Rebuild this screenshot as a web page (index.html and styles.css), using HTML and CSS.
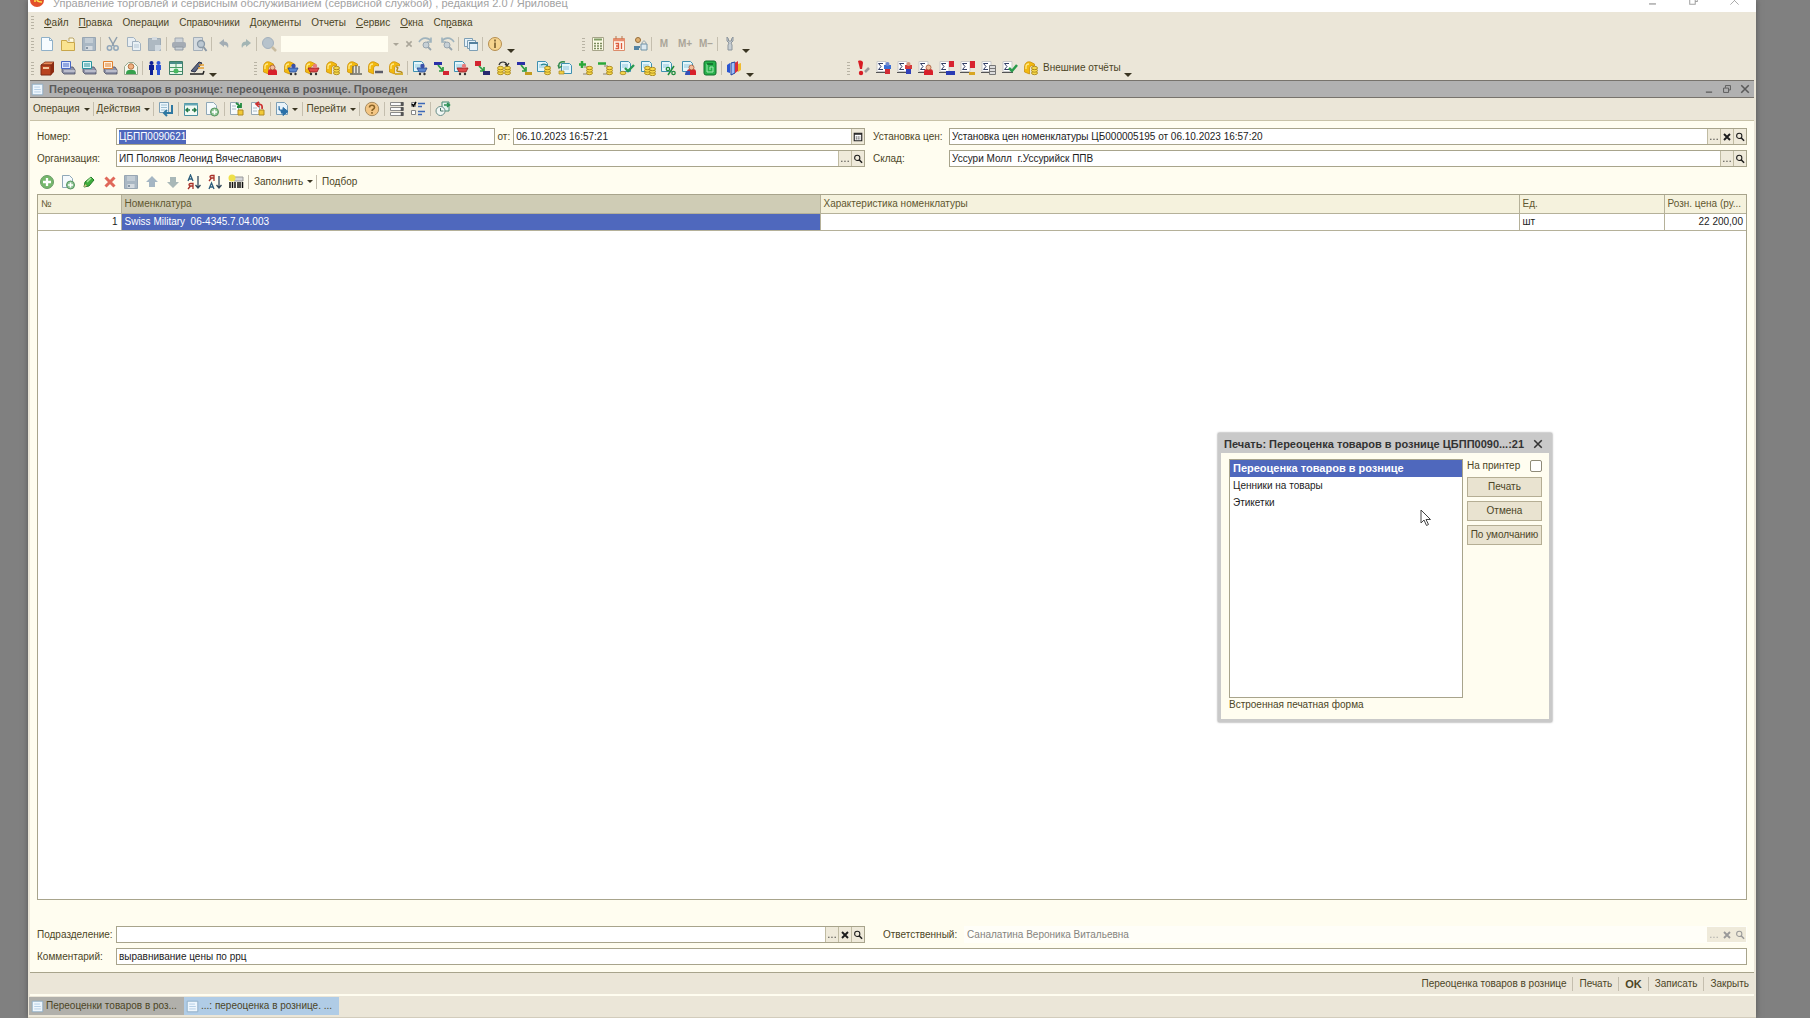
FILE: index.html
```html
<!DOCTYPE html>
<html lang="ru">
<head>
<meta charset="utf-8">
<title>Переоценка товаров в рознице</title>
<link rel="stylesheet" href="styles.css">
<script src="app.js" defer></script>
</head>
<body>
<svg class="sprite" aria-hidden="true">
  <defs>
    <!-- shared parts -->
    <g id="p-page"><path d="M2.500 1.500h8l3 3v10h-11z" fill="#f6fbff" stroke="#8fb0c8"/><path d="M10.500 1.500v3h3" fill="none" stroke="#8fb0c8"/></g>
    <g id="p-sheet"><path d="M1.500 1.500h8l2 2v8h-10z" fill="#e4f6fb" stroke="#3f90b0"/><path d="M3 5h6M3 7h6" stroke="#8fc6dc"/></g>
    <g id="p-sigma"><path d="M1 1.500h9v10H1z" fill="#fff" stroke="#c9c9c9"/><path d="M0 12.500h11" stroke="#555"/><path d="M7 3.500H2.500L5 6.500 2.500 9.500H7" fill="none" stroke="#333f66"/></g>
    <g id="p-coin"><path d="M1.500 12V7c0-4 3-6 6-5l4 2v2c-3-1-5 0-5 3v5z" fill="#f2b90f" stroke="#c98a00" stroke-width=".7"/><path d="M3 9V7c0-2 1-3 3-3" fill="none" stroke="#ffe888" stroke-width="1.300"/></g>
    <g id="p-money"><g fill="#f7d84a" stroke="#a07c10" stroke-width=".8"><ellipse cx="11.500" cy="13" rx="3" ry="1.700"/><ellipse cx="11.500" cy="10.500" rx="3" ry="1.700"/><ellipse cx="11.500" cy="8" rx="3" ry="1.700"/></g></g>
    <g id="p-printer"><path d="M2 9l3-2h8l2 3v4H4l-2-2z" fill="#8f93a8" stroke="#4c4f66" stroke-width=".8"/><path d="M4 11h11" stroke="#e6e6ee"/></g>
    <g id="p-red"><path d="M6 15v-3c0-2 1-3 3-3h3c2 0 3 1 3 3v3z" fill="#d8202a"/><circle cx="10.500" cy="7.500" r="2.500" fill="#f3bd9b" stroke="#9a4a28" stroke-width=".7"/></g>
    <g id="p-cart"><path d="M5 8h10l-2 4H7z" fill="#5a86cf" stroke="#24448c" stroke-width=".8"/><circle cx="8" cy="14" r="1.200" fill="#333"/><circle cx="12.500" cy="14" r="1.200" fill="#333"/><circle cx="10.500" cy="6" r="2.200" fill="#3a4fa8"/></g>
    <g id="p-cartred"><path d="M4 8h11l-2 4H6z" fill="#e04848" stroke="#8e1c1c" stroke-width=".8"/><circle cx="7" cy="14" r="1.200" fill="#333"/><circle cx="12" cy="14" r="1.200" fill="#333"/><circle cx="11" cy="6" r="2.200" fill="#e67c7c"/></g>
    <g id="p-lens"><circle cx="7" cy="6.500" r="3.500" fill="none" stroke-width="1.400"/><path d="M9.500 9l4 4" stroke-width="2"/></g>
  </defs>

  <symbol id="i-new" viewBox="0 0 16 16"><use href="#p-page"/></symbol>
  <symbol id="i-doc" viewBox="0 0 16 16"><path d="M1.500 1.500h13v13h-13z" fill="#eef6fd" stroke="#86a7c2"/><path d="M4 5h7M4 8h8M4 11h8" stroke="#a9c6e2"/></symbol>
  <symbol id="i-open" viewBox="0 0 16 16"><path d="M1.500 4.500h5l1 2h7v8h-13z" fill="#fae390" stroke="#c8a64a"/><path d="M9 5V2h4l1 1v3" fill="#fffbe0" stroke="#b9a468"/></symbol>
  <symbol id="i-save" viewBox="0 0 16 16"><path d="M1.500 1.500h13v13h-13z" fill="#a9b7c3" stroke="#98a6b3"/><path d="M4 2h8v5H4z" fill="#c3cdd5"/><path d="M4.500 10h7v4h-7z" fill="#d5dbe0"/><path d="M6 11v2" stroke="#8796a4" stroke-width="2"/></symbol>
  <symbol id="i-cut" viewBox="0 0 16 16"><path d="M4 1l5 9M12 1L7 10" stroke="#8e9eac" stroke-width="1.500"/><g fill="none" stroke="#91a7ba" stroke-width="1.500"><circle cx="4.500" cy="12" r="2.200"/><circle cx="11" cy="12" r="2.200"/></g></symbol>
  <symbol id="i-copy" viewBox="0 0 16 16"><path d="M1.500 1.500h6l2 2v7h-8z" fill="#e8eef2" stroke="#a2b2c0"/><path d="M6.500 5.500h6l2 2v7h-8z" fill="#eaf1f5" stroke="#a2b2c0"/><path d="M8 9h5M8 11h5" stroke="#b4c6d4"/></symbol>
  <symbol id="i-paste" viewBox="0 0 16 16"><path d="M1.500 2.500h12v12h-12z" fill="#aeb9c2" stroke="#9caab6"/><path d="M5 1h5v3H5z" fill="#d5dbe0"/><path d="M8 9h6v4l-2 2H8z" fill="#cfd8df"/></symbol>
  <symbol id="i-print" viewBox="0 0 16 16"><path d="M4 2h8v5H4z" fill="#ccd2d8" stroke="#a0a8b0"/><rect x="1" y="6" width="14" height="6" rx="2" fill="#a4abb4"/><path d="M4 11h8v3H4z" fill="#c9d0d6" stroke="#9199a3"/></symbol>
  <symbol id="i-preview" viewBox="0 0 16 16"><path d="M1.500 1.500h9v13h-9z" fill="#d6dce1" stroke="#a4afb9"/><circle cx="9" cy="8" r="3.500" fill="#bcc8d2" stroke="#8998a6" stroke-width="1.300"/><path d="M11.500 11l3 4" stroke="#8b98a6" stroke-width="2"/></symbol>
  <symbol id="i-undo" viewBox="0 0 16 16"><path d="M3 7l5-4v2.500c4 0 5 3 4 6.500-1-2-2-3-4-3V11z" fill="#a3adb4"/></symbol>
  <symbol id="i-redo" viewBox="0 0 16 16"><path d="M14 7L9 3v2.500c-4 0-5 3-4 6.500 1-2 2-3 4-3V11z" fill="#a3b5b4"/></symbol>
  <symbol id="i-find" viewBox="0 0 16 16"><circle cx="7" cy="7" r="5.500" fill="#b7c3cc" stroke="#a3b0bc"/><path d="M11 11l4 4" stroke="#c8bca0" stroke-width="2.500"/></symbol>
  <symbol id="i-xgrey" viewBox="0 0 16 16"><path d="M5 5l6 6M11 5l-6 6" stroke="#aaa69a" stroke-width="1.800"/></symbol>
  <symbol id="i-next" viewBox="0 0 16 16"><path d="M1 6c3-5 9-5 12-1M13 1.500V6H9" fill="none" stroke="#9fb3bd" stroke-width="1.600"/><circle cx="8" cy="9" r="3" fill="#c6d0d6" stroke="#98a5ae"/><path d="M10 11l3 3" stroke="#98a5ae" stroke-width="1.800"/></symbol>
  <symbol id="i-prev" viewBox="0 0 16 16"><path d="M15 6C12 1 6 1 3 5M3 1.500V6h4" fill="none" stroke="#9fb3bd" stroke-width="1.600"/><circle cx="8" cy="9" r="3" fill="#c6d0d6" stroke="#98a5ae"/><path d="M10 11l3 3" stroke="#98a5ae" stroke-width="1.800"/></symbol>
  <symbol id="i-windows" viewBox="0 0 16 16"><g fill="#e6f2fa" stroke="#7d9fb5"><path d="M1.500 2.500h8v8h-8z"/><path d="M4.500 4.500h8v8h-8z"/><path d="M6.500 6.500h8v8h-8z"/></g><path d="M6 7h9" stroke="#54809e" stroke-width="2"/></symbol>
  <symbol id="i-info" viewBox="0 0 16 16"><circle cx="8" cy="8" r="6.500" fill="#f6d48e" stroke="#b58e50"/><path d="M8 6.500V12M8 3.500v2" stroke="#7c6232" stroke-width="1.700"/></symbol>
  <symbol id="i-calc" viewBox="0 0 16 16"><path d="M2.500 1.500h11v13h-11z" fill="#fbfae6" stroke="#a7a58a"/><path d="M4 3.500h8" stroke="#7f9c64" stroke-width="2"/><path d="M4 7.500h8M4 10h8M4 12.500h8" stroke="#7b8b5c" stroke-width="1.500" stroke-dasharray="2 1"/></symbol>
  <symbol id="i-cal" viewBox="0 0 16 16"><path d="M2.500 2.500h11v12h-11z" fill="#fff4ea" stroke="#dc8d6c"/><path d="M2 4h12" stroke="#e88c6c" stroke-width="2.500"/><path d="M5 0v3M11 0v3" stroke="#b87850"/><path d="M4.500 7.500h3v5h-3M5 10h2.500M10.500 7v6" fill="none" stroke="#dd5a3c" stroke-width="1.300"/></symbol>
  <symbol id="i-usercalc" viewBox="0 0 16 16"><circle cx="6" cy="4" r="2.500" fill="#e0b070" stroke="#956b35"/><path d="M2 11h6M2 13h5" stroke="#5484a4" stroke-width="1.800"/><path d="M9 8h6v6H9z" fill="#dce9f0" stroke="#6f91a6"/><path d="M10 8c0-4 4-4 4 0" fill="none" stroke="#8fa4b0"/></symbol>
  <symbol id="i-wrench" viewBox="0 0 16 16"><path d="M5 1v4l2 2-1 2v5h4V9L9 7l2-2V1L9.500 3v2h-3V3z" fill="#c8cfd4" stroke="#8c959c"/></symbol>

  <symbol id="i-book" viewBox="0 0 16 16"><path d="M2 5l4-3h9l-3 3z" fill="#e98a58" stroke="#7c2a14" stroke-width=".8"/><path d="M2 5h10v10H2z" fill="#b9431f" stroke="#7c2a14"/><path d="M12 5l3-3v10l-3 3z" fill="#8c2a10"/><path d="M4 8h6" stroke="#f2c69c" stroke-width="2"/></symbol>
  <symbol id="i-pr1" viewBox="0 0 16 16"><use href="#p-printer"/><path d="M1.500 1.500h9v7h-9z" fill="#dce6ff" stroke="#4766c4"/><path d="M3 4h6M3 6h6" stroke="#4766c4"/></symbol>
  <symbol id="i-pr2" viewBox="0 0 16 16"><use href="#p-printer"/><path d="M1.500 1.500h9v7h-9z" fill="#dff6f6" stroke="#28929c"/><path d="M3 4h6M3 6h6" stroke="#28929c"/></symbol>
  <symbol id="i-pr3" viewBox="0 0 16 16"><use href="#p-printer"/><path d="M1.500 1.500h9v7h-9z" fill="#fff0dc" stroke="#e08030"/><path d="M3 4h6M3 6h6" stroke="#e08030"/></symbol>
  <symbol id="i-client" viewBox="0 0 16 16"><path d="M1.500 6.500l4-4h5l4 4v8h-13z" fill="#f4f8ee" stroke="#98a890"/><circle cx="8" cy="6.500" r="2.800" fill="#f0b080" stroke="#a05a28" stroke-width=".8"/><path d="M3 14c0-4 2-4 5-4s5 0 5 4z" fill="#36a04c"/></symbol>
  <symbol id="i-people" viewBox="0 0 16 16"><g fill="#0d1f96"><circle cx="4.500" cy="3" r="2"/><path d="M2 5h5v5H6v5H3v-5H2z"/></g><g fill="#2e55d8"><circle cx="11.500" cy="3" r="2"/><path d="M9 5h5v5h-1v5h-3v-5H9z"/></g></symbol>
  <symbol id="i-table" viewBox="0 0 16 16"><path d="M1.500 1.500h13v13h-13z" fill="#e8f5ea" stroke="#3f7f68"/><path d="M2 3h12" stroke="#4c8c8c" stroke-width="2"/><path d="M2 7.500h12M8 2v5M2 11.500h12" stroke="#4d9a68"/><circle cx="8" cy="11" r="2.500" fill="#48b860"/></symbol>
  <symbol id="i-sign" viewBox="0 0 16 16"><path d="M2 11l8-9 3 1-7 9z" fill="#5e6782" stroke="#2b3148"/><path d="M1 14h13l1-3" fill="none" stroke="#222" stroke-width="1.500"/><path d="M10 5h5M9 8h6" stroke="#e8a030" stroke-width="1.500"/></symbol>

  <symbol id="i-c1" viewBox="0 0 16 16"><use href="#p-coin"/><use href="#p-red"/></symbol>
  <symbol id="i-c2" viewBox="0 0 16 16"><use href="#p-coin"/><use href="#p-cart"/></symbol>
  <symbol id="i-c3" viewBox="0 0 16 16"><use href="#p-coin"/><use href="#p-cartred"/></symbol>
  <symbol id="i-c4" viewBox="0 0 16 16"><use href="#p-coin"/><use href="#p-money"/></symbol>
  <symbol id="i-c5" viewBox="0 0 16 16"><use href="#p-coin"/><path d="M7 6v7M10 5v8M13 6v7M4 14h12" stroke="#6a6a60" stroke-width="1.300"/></symbol>
  <symbol id="i-c6" viewBox="0 0 16 16"><use href="#p-coin"/><path d="M8 12h8" stroke="#5c5c68" stroke-width="2.500"/></symbol>
  <symbol id="i-c7" viewBox="0 0 16 16"><use href="#p-coin"/><path d="M8 7c4 0 0 3 1 4s5 0 5 2" fill="none" stroke="#b28a1c" stroke-width="1.500"/><path d="M7 14h8" stroke="#d4b03a" stroke-width="2"/></symbol>

  <symbol id="i-d1" viewBox="0 0 16 16"><use href="#p-sheet"/><use href="#p-cart"/></symbol>
  <symbol id="i-d2" viewBox="0 0 16 16"><path d="M1 2h8v3H1z" fill="#2a2fa8"/><path d="M5 5l5 6M10 7v4H6" fill="none" stroke="#2d9c44" stroke-width="1.700"/><path d="M10 11h6v4h-6z" fill="#d32430"/></symbol>
  <symbol id="i-d3" viewBox="0 0 16 16"><use href="#p-sheet"/><use href="#p-cartred"/></symbol>
  <symbol id="i-d4" viewBox="0 0 16 16"><path d="M1 1h6v5H1z" fill="#d32430"/><path d="M5 6l5 5M10 7v4H6" fill="none" stroke="#2d9c44" stroke-width="1.700"/><path d="M9 11h7v4H9z" fill="#27286e"/></symbol>
  <symbol id="i-d5" viewBox="0 0 16 16"><use href="#p-money" x="-6"/><use href="#p-money" x="1"/><path d="M4 5c1-4 7-4 8 0M14 3l-2 3-2-2" fill="none" stroke="#333" stroke-width="1.200"/></symbol>
  <symbol id="i-d6" viewBox="0 0 16 16"><path d="M1 2h8v3H1z" fill="#2a2fa8"/><path d="M5 5l5 6M10 7v4H6" fill="none" stroke="#2d9c44" stroke-width="1.700"/><path d="M9 12h7v3H9z" fill="#c39b1d"/></symbol>
  <symbol id="i-d7" viewBox="0 0 16 16"><use href="#p-sheet"/><path d="M5 5c4-2 7 0 7 3M14 6l-2 3-2-2" fill="none" stroke="#288690" stroke-width="1.300"/><use href="#p-money"/></symbol>
  <symbol id="i-d8" viewBox="0 0 16 16"><use href="#p-sheet" x="3" y="2"/><path d="M8 2C4 1 1 3 2 7M1 5l1 3 3-2" fill="none" stroke="#2e8a4c" stroke-width="1.300"/><path d="M2 11h5v3H2z" fill="#f0cf44" stroke="#a8841c" stroke-width=".7"/></symbol>
  <symbol id="i-d9" viewBox="0 0 16 16"><path d="M4 1v7M1 4.500h7" stroke="#2aa83a" stroke-width="2.500"/><path d="M6 7h4v7H5" fill="none" stroke="#898270"/><use href="#p-money"/></symbol>
  <symbol id="i-d10" viewBox="0 0 16 16"><path d="M0 3.500h8" stroke="#2aa83a" stroke-width="2.500"/><path d="M6 6h4v8H5" fill="none" stroke="#898270"/><use href="#p-money"/></symbol>
  <symbol id="i-d11" viewBox="0 0 16 16"><use href="#p-sheet"/><path d="M6 8l3 3 6-6" fill="none" stroke="#259a50" stroke-width="2.300"/><ellipse cx="4" cy="13" rx="3" ry="1.700" fill="#f4d54e" stroke="#a07c10" stroke-width=".7"/></symbol>
  <symbol id="i-d12" viewBox="0 0 16 16"><use href="#p-sheet"/><use href="#p-money" x="-4"/><use href="#p-money" x="1" y="1"/></symbol>
  <symbol id="i-d13" viewBox="0 0 16 16"><use href="#p-sheet"/><path d="M14 6l-6 9" stroke="#1e8c3c" stroke-width="1.500"/><circle cx="8" cy="9" r="1.700" fill="none" stroke="#1e8c3c" stroke-width="1.300"/><circle cx="13.500" cy="13" r="1.700" fill="none" stroke="#1e8c3c" stroke-width="1.300"/></symbol>
  <symbol id="i-d14" viewBox="0 0 16 16"><use href="#p-sheet"/><use href="#p-red"/><path d="M4 15c0-4 2-5 5-4v4z" fill="#3350b8"/></symbol>
  <symbol id="i-d15" viewBox="0 0 16 16"><rect x="2" y="1" width="12" height="14" rx="2" fill="#27b04a" stroke="#0e6e2a"/><path d="M5 4v8h6V7H8v3" fill="none" stroke="#a6eab4"/><path d="M5 4h6" stroke="#0d5c24" stroke-width="1.300"/></symbol>
  <symbol id="i-books" viewBox="0 0 16 16"><path d="M1 5l3-2v10l-3-1z" fill="#2a55d0"/><path d="M5 3l4-1v11l-4 2z" fill="#9fc0f8" stroke="#20409c"/><path d="M9 3l3-2v10l-3 2z" fill="#d82c3c"/><path d="M12 4l3-1v7l-3 2z" fill="#f0bb30"/></symbol>

  <symbol id="i-alert" viewBox="0 0 16 16"><path d="M3 1c3-1 5 0 5 2L7 9H5z" fill="#d81c24"/><circle cx="6" cy="13" r="2.200" fill="#d81c24"/><path d="M10 12l4-4" stroke="#9a9a9a" stroke-width="2.500"/></symbol>
  <symbol id="i-s1" viewBox="0 0 16 16"><use href="#p-sigma"/><path d="M8 5h7v4H8z" fill="#3c6fd4"/><path d="M9 9h5v5H9z" fill="#d22c34"/><circle cx="11.500" cy="4" r="2" fill="#6f88cf"/></symbol>
  <symbol id="i-s2" viewBox="0 0 16 16"><use href="#p-sigma"/><path d="M8 5h7v4H8z" fill="#d63a3a"/><path d="M9 9h5v5H9z" fill="#3141ba"/><circle cx="11.500" cy="4" r="2" fill="#d79278"/></symbol>
  <symbol id="i-s3" viewBox="0 0 16 16"><use href="#p-sigma"/><use href="#p-red"/></symbol>
  <symbol id="i-s4" viewBox="0 0 16 16"><use href="#p-sigma"/><path d="M10 1h5v6h-5z" fill="#d82430"/><path d="M7 11h9v4H7z" fill="#2a3cb4"/></symbol>
  <symbol id="i-s5" viewBox="0 0 16 16"><use href="#p-sigma"/><path d="M10 1h5v7h-5z" fill="#d82430"/><path d="M9 12h6v3H9z" fill="#d9a622"/></symbol>
  <symbol id="i-s6" viewBox="0 0 16 16"><use href="#p-sigma"/><path d="M8.500 5.500h6v9h-6zM8 8.500h6M8 11.500h6" fill="#ddd" stroke="#777"/></symbol>
  <symbol id="i-s7" viewBox="0 0 16 16"><use href="#p-sigma"/><path d="M7 8l3 3 5-6" fill="none" stroke="#2a9c4c" stroke-width="2.500"/></symbol>

  <symbol id="i-goto" viewBox="0 0 16 16"><path d="M1.500 1.500h9v10h-9z" fill="#edf6fb" stroke="#7c9fb6"/><path d="M3 4h6M3 6.500h6M3 9h4" stroke="#9dbfd2"/><path d="M14 4v8H6M9 9l-3 3 3 3" fill="none" stroke="#2e78a2" stroke-width="2"/></symbol>
  <symbol id="i-refresh" viewBox="0 0 16 16"><path d="M1.500 2.500h13v12h-13z" fill="#f2faf4" stroke="#4a90a0"/><path d="M1 3.500h14" stroke="#65a7b5" stroke-width="2"/><path d="M3 9h4M5 7L3 9l2 2M13 9H9M11 7l2 2-2 2" fill="none" stroke="#247a48" stroke-width="1.500"/></symbol>
  <symbol id="i-addcopy" viewBox="0 0 16 16"><path d="M2.500 1.500h7l3 3v9h-10z" fill="#f5fafc" stroke="#8fa8b8"/><circle cx="10.500" cy="11" r="4" fill="#8fc494" stroke="#55945e"/><path d="M10.500 8.500v5M8 11h5" stroke="#fff" stroke-width="1.500"/></symbol>
  <symbol id="i-post" viewBox="0 0 16 16"><path d="M1.500 1.500h8v12h-8z" fill="#f7fafc" stroke="#96a8b4"/><path d="M3 5h4M3 8h4" stroke="#a9bac6"/><path d="M7 2l5 4M12 2v4H8" fill="none" stroke="#228a40" stroke-width="1.800"/><path d="M9 9h5v5H9z" fill="#f2c938" stroke="#b08a20"/></symbol>
  <symbol id="i-unpost" viewBox="0 0 16 16"><path d="M1.500 1.500h8v12h-8z" fill="#f7fafc" stroke="#96a8b4"/><path d="M3 7h4M3 10h4" stroke="#a9bac6"/><path d="M12 8C13 3 10 3 7 3M9 1L6 3l3 3" fill="none" stroke="#cc3030" stroke-width="1.700"/><path d="M9 9h5v5H9z" fill="#f2c938" stroke="#b08a20"/></symbol>
  <symbol id="i-enter" viewBox="0 0 16 16"><path d="M1.500 1.500h8l3 3v9h-11z" fill="#e9f3fa" stroke="#7c9fb6"/><path d="M4 5v4h4V6.500l5 4-5 4V12H6" fill="#2a70a8" stroke="#2a70a8"/></symbol>
  <symbol id="i-help" viewBox="0 0 16 16"><circle cx="8" cy="8" r="6.700" fill="#f4c684" stroke="#a88c60"/><path d="M5.500 6.500c0-3 5-3 5 0 0 2-2.500 1.500-2.500 3.500M8 11v1.700" fill="none" stroke="#8a6428" stroke-width="1.600"/></symbol>
  <symbol id="i-rows" viewBox="0 0 16 16"><g fill="#fbfbfb" stroke="#8b8b8b"><path d="M1.500 1.500h13v3h-13zM1.500 6.500h13v3h-13zM1.500 11.500h13v3h-13z"/></g><path d="M13 1v14" stroke="#555" stroke-width="2.500" stroke-dasharray="4 1"/></symbol>
  <symbol id="i-checks" viewBox="0 0 16 16"><path d="M1.500 1.500h4v4h-4zM1.500 9.500h4v4h-4z" fill="#fff" stroke="#888"/><path d="M2 3l1.500 2L6 1" fill="none" stroke="#000" stroke-width="1.500"/><path d="M8 2.500h7M8 5.500h4M8 10.500h7M8 13.500h4" stroke="#3c68b8" stroke-width="1.700"/></symbol>
  <symbol id="i-report" viewBox="0 0 16 16"><path d="M7 1h7v9H7z" fill="#e5f2ec" stroke="#458a72"/><circle cx="5.500" cy="10" r="4.500" fill="#f1f7f4" stroke="#688c88"/><path d="M5.500 7v3h3" fill="none" stroke="#476"/><path d="M9 4h5M12 2l2.500 2L12 6" fill="none" stroke="#2a9054" stroke-width="1.500"/></symbol>

  <symbol id="i-add" viewBox="0 0 16 16"><circle cx="8" cy="8" r="6.500" fill="#76b86c" stroke="#6a9c68"/><path d="M8 4v8M4 8h8" stroke="#fff" stroke-width="2.300"/></symbol>
  <symbol id="i-edit" viewBox="0 0 16 16"><path d="M3 13l1-5 6-5 3 3-5 6z" fill="#3fae3c" stroke="#247a28"/><path d="M6 8l4-4" stroke="#a8e69c" stroke-width="1.500"/><path d="M3 13l1-3 2 2z" fill="#e3c28a"/></symbol>
  <symbol id="i-del" viewBox="0 0 16 16"><path d="M3.500 3.500l9 9M12.500 3.500l-9 9" stroke="#e0685a" stroke-width="3"/></symbol>
  <symbol id="i-up" viewBox="0 0 16 16"><path d="M8 2l6 6h-3v5H5V8H2z" fill="#a5b6c3"/></symbol>
  <symbol id="i-down" viewBox="0 0 16 16"><path d="M8 14l6-6h-3V3H5v5H2z" fill="#a9b8b8"/></symbol>
  <symbol id="i-asc" viewBox="0 0 16 16"><path d="M2 7l2.500-6L7 7M3 5h3" fill="none" stroke="#2c5e7c" stroke-width="1.300"/><path d="M7 15V9.500H4.500c-2 0-2 2.500 0 2.500H7M4.500 12L2 15" fill="none" stroke="#a83028" stroke-width="1.300"/><path d="M12 2v12M9.500 11l2.500 3 2.500-3" fill="none" stroke="#334a5c" stroke-width="1.300"/></symbol>
  <symbol id="i-desc" viewBox="0 0 16 16"><path d="M7 7V1.500H4.500c-2 0-2 2.500 0 2.500H7M4.500 4L2 7" fill="none" stroke="#a83028" stroke-width="1.300"/><path d="M2 15l2.500-6L7 15M3 13h3" fill="none" stroke="#2c5e7c" stroke-width="1.300"/><path d="M12 2v12M9.500 11l2.500 3 2.500-3" fill="none" stroke="#334a5c" stroke-width="1.300"/></symbol>
  <symbol id="i-barcode" viewBox="0 0 16 16"><path d="M6 3h9v4H6z" fill="#d5d6d8" stroke="#999"/><path d="M2 8v6M4.500 8v6M7 8v6M10 8v6M12 8v6M14.500 8v6" stroke="#111" stroke-width="1.500"/><circle cx="4" cy="4" r="3.500" fill="#eee04a"/></symbol>

  <symbol id="i-lens" viewBox="0 0 16 16"><use href="#p-lens" stroke="currentColor"/></symbol>
  <symbol id="i-x" viewBox="0 0 16 16"><path d="M4 4l8 8M12 4l-8 8" stroke="currentColor" stroke-width="2.500"/></symbol>
  <symbol id="i-dots" viewBox="0 0 16 16"><path d="M3 11h1.500M7.200 11h1.500M11.500 11H13" stroke="currentColor" stroke-width="1.500"/></symbol>
  <symbol id="i-date" viewBox="0 0 16 16"><path d="M3 3h10v10H3z" fill="#fff" stroke="#222" stroke-width="1.500"/><path d="M3 4h10" stroke="#222" stroke-width="2"/><path d="M5 8h6M5 10.500h6" stroke="#222" stroke-width="1.300" stroke-dasharray="1.500 1"/></symbol>
  <symbol id="i-min" viewBox="0 0 16 16"><path d="M3 13h10" stroke="currentColor" stroke-width="2"/></symbol>
  <symbol id="i-restore" viewBox="0 0 16 16"><path d="M2.500 6.500h8v7h-8zM5.500 6V2.500h8v7H11" fill="none" stroke="currentColor" stroke-width="1.500"/></symbol>
  <symbol id="i-close" viewBox="0 0 16 16"><path d="M2 2l12 12M14 2L2 14" stroke="currentColor" stroke-width="2.500"/></symbol>
  <symbol id="i-thinclose" viewBox="0 0 16 16"><path d="M2 2l12 12M14 2L2 14" stroke="currentColor" stroke-width="1.300"/></symbol>
</svg>

<div class="app">
  <header class="caption">
    <svg class="logo" viewBox="0 0 14 14"><circle cx="7" cy="7" r="7" fill="#e2502a"/><path d="M3 5l2-1v5M11 5c-3-2-4 0-4 1.500S9 9 12 9" fill="none" stroke="#ffe34a" stroke-width="1.500"/></svg>
    <span class="caption-text">Управление торговлей и сервисным обслуживанием (сервисной службой) , редакция 2.0 / Яриловец</span>
    <div class="caption-buttons">
      <button aria-label="Свернуть"><svg><use href="#i-min"/></svg></button>
      <button aria-label="Восстановить"><svg><use href="#i-restore"/></svg></button>
      <button aria-label="Закрыть"><svg><use href="#i-thinclose"/></svg></button>
    </div>
  </header>

  <nav class="menu">
    <i class="grip"></i>
    <button><u>Ф</u>айл</button><button><u>П</u>равка</button><button>Операции</button><button>Справочники</button><button>Документы</button><button>Отчеты</button><button><u>С</u>ервис</button><button><u>О</u>кна</button><button>Сп<u>р</u>авка</button>
  </nav>

  <div class="bar">
    <div class="section section-a">
      <i class="grip"></i>
      <button class="ib" aria-label="Новый"><svg><use href="#i-new"/></svg></button>
      <button class="ib" aria-label="Открыть"><svg><use href="#i-open"/></svg></button>
      <button class="ib" aria-label="Сохранить"><svg><use href="#i-save"/></svg></button>
      <i class="sep"></i>
      <button class="ib" aria-label="Вырезать"><svg><use href="#i-cut"/></svg></button>
      <button class="ib" aria-label="Копировать"><svg><use href="#i-copy"/></svg></button>
      <button class="ib" aria-label="Вставить"><svg><use href="#i-paste"/></svg></button>
      <i class="sep"></i>
      <button class="ib" aria-label="Печать"><svg><use href="#i-print"/></svg></button>
      <button class="ib" aria-label="Просмотр"><svg><use href="#i-preview"/></svg></button>
      <i class="sep"></i>
      <button class="ib" aria-label="Отменить"><svg><use href="#i-undo"/></svg></button>
      <button class="ib" aria-label="Вернуть"><svg><use href="#i-redo"/></svg></button>
      <i class="sep"></i>
      <button class="ib" aria-label="Найти"><svg><use href="#i-find"/></svg></button>
      <input class="search" aria-label="Поиск">
      <button class="ib narrow" aria-label="История поиска"><i class="caret pale"></i></button>
      <button class="ib narrow" aria-label="Очистить"><svg><use href="#i-xgrey"/></svg></button>
      <button class="ib" aria-label="Найти далее"><svg><use href="#i-next"/></svg></button>
      <button class="ib" aria-label="Найти ранее"><svg><use href="#i-prev"/></svg></button>
      <i class="sep"></i>
      <button class="ib" aria-label="Окна"><svg><use href="#i-windows"/></svg></button>
      <i class="sep"></i>
      <button class="ib" aria-label="Сведения"><svg><use href="#i-info"/></svg></button>
      <button class="more" aria-label="Ещё"><i class="caret"></i></button>
    </div>
    <div class="section">
      <i class="grip"></i>
      <button class="ib" aria-label="Калькулятор"><svg><use href="#i-calc"/></svg></button>
      <button class="ib" aria-label="Календарь"><svg><use href="#i-cal"/></svg></button>
      <button class="ib" aria-label="Пользователь"><svg><use href="#i-usercalc"/></svg></button>
      <i class="sep"></i>
      <button class="ib mem">M</button><button class="ib mem">M+</button><button class="ib mem">M−</button>
      <i class="sep"></i>
      <button class="ib" aria-label="Настройка"><svg><use href="#i-wrench"/></svg></button>
      <button class="more" aria-label="Ещё"><i class="caret"></i></button>
    </div>
  </div>

  <div class="bar">
    <div class="section section-b">
      <i class="grip"></i>
      <button class="ib" aria-label="Журнал"><svg><use href="#i-book"/></svg></button>
      <button class="ib" aria-label="Заказы"><svg><use href="#i-pr1"/></svg></button>
      <button class="ib" aria-label="Продажи"><svg><use href="#i-pr2"/></svg></button>
      <button class="ib" aria-label="Закупки"><svg><use href="#i-pr3"/></svg></button>
      <button class="ib" aria-label="Клиент"><svg><use href="#i-client"/></svg></button>
      <i class="sep"></i>
      <button class="ib" aria-label="Контрагенты"><svg><use href="#i-people"/></svg></button>
      <button class="ib" aria-label="Номенклатура"><svg><use href="#i-table"/></svg></button>
      <button class="ib" aria-label="Подпись"><svg><use href="#i-sign"/></svg></button>
      <button class="more" aria-label="Ещё"><i class="caret"></i></button>
    </div>
    <div class="section section-c">
      <i class="grip"></i>
      <button class="ib" aria-label="Оплата покупателя"><svg><use href="#i-c1"/></svg></button>
      <button class="ib" aria-label="Оплата заказа"><svg><use href="#i-c2"/></svg></button>
      <button class="ib" aria-label="Возврат оплаты"><svg><use href="#i-c3"/></svg></button>
      <button class="ib" aria-label="Касса"><svg><use href="#i-c4"/></svg></button>
      <button class="ib" aria-label="Банк"><svg><use href="#i-c5"/></svg></button>
      <button class="ib" aria-label="Расход"><svg><use href="#i-c6"/></svg></button>
      <button class="ib" aria-label="Перемещение денег"><svg><use href="#i-c7"/></svg></button>
      <i class="sep"></i>
      <div class="run">
        <button class="ib" aria-label="Реализация"><svg><use href="#i-d1"/></svg></button>
        <button class="ib" aria-label="Отгрузка"><svg><use href="#i-d2"/></svg></button>
        <button class="ib" aria-label="Возврат"><svg><use href="#i-d3"/></svg></button>
        <button class="ib" aria-label="Приёмка"><svg><use href="#i-d4"/></svg></button>
        <button class="ib" aria-label="Обмен"><svg><use href="#i-d5"/></svg></button>
        <button class="ib" aria-label="Передача"><svg><use href="#i-d6"/></svg></button>
        <button class="ib" aria-label="Поступление"><svg><use href="#i-d7"/></svg></button>
        <button class="ib" aria-label="Перемещение"><svg><use href="#i-d8"/></svg></button>
        <button class="ib" aria-label="Оприходование"><svg><use href="#i-d9"/></svg></button>
        <button class="ib" aria-label="Списание"><svg><use href="#i-d10"/></svg></button>
        <button class="ib" aria-label="Инвентаризация"><svg><use href="#i-d11"/></svg></button>
        <button class="ib" aria-label="Установка цен"><svg><use href="#i-d12"/></svg></button>
        <button class="ib" aria-label="Скидки"><svg><use href="#i-d13"/></svg></button>
        <button class="ib" aria-label="Скидки клиентам"><svg><use href="#i-d14"/></svg></button>
        <button class="ib" aria-label="Чек"><svg><use href="#i-d15"/></svg></button>
      </div>
      <i class="sep"></i>
      <button class="ib" aria-label="Справочники"><svg><use href="#i-books"/></svg></button>
      <button class="more" aria-label="Ещё"><i class="caret"></i></button>
    </div>
    <div class="section">
      <i class="grip"></i>
      <button class="ib" aria-label="Монитор"><svg><use href="#i-alert"/></svg></button>
      <button class="ib" aria-label="Отчёт по покупателям"><svg><use href="#i-s1"/></svg></button>
      <button class="ib" aria-label="Отчёт по поставщикам"><svg><use href="#i-s2"/></svg></button>
      <button class="ib" aria-label="Отчёт по клиентам"><svg><use href="#i-s3"/></svg></button>
      <button class="ib" aria-label="Отчёт по продажам"><svg><use href="#i-s4"/></svg></button>
      <button class="ib" aria-label="Отчёт по закупкам"><svg><use href="#i-s5"/></svg></button>
      <button class="ib" aria-label="Отчёт по складу"><svg><use href="#i-s6"/></svg></button>
      <button class="ib" aria-label="Отчёт по заказам"><svg><use href="#i-s7"/></svg></button>
      <button class="ib" aria-label="Отчёт по деньгам"><svg><use href="#i-c4"/></svg></button>
      <button class="textbtn">Внешние отчёты</button>
      <button class="more" aria-label="Ещё"><i class="caret"></i></button>
    </div>
  </div>

  <main class="doc">
    <div class="doc-title">
      <svg><use href="#i-doc"/></svg>
      <h1>Переоценка товаров в рознице: переоценка в рознице. Проведен</h1>
      <button aria-label="Свернуть документ"><svg><use href="#i-min"/></svg></button>
      <button aria-label="Восстановить документ"><svg><use href="#i-restore"/></svg></button>
      <button aria-label="Закрыть документ"><svg><use href="#i-close"/></svg></button>
    </div>
    <div class="doc-bar">
      <button class="textbtn">Операция<i class="caret small"></i></button>
      <i class="sep"></i>
      <button class="textbtn">Действия<i class="caret small"></i></button>
      <i class="sep"></i>
      <button class="ib" aria-label="Найти в списке"><svg><use href="#i-goto"/></svg></button>
      <i class="sep"></i>
      <button class="ib" aria-label="Перечитать"><svg><use href="#i-refresh"/></svg></button>
      <button class="ib" aria-label="Скопировать документ"><svg><use href="#i-addcopy"/></svg></button>
      <i class="sep"></i>
      <button class="ib" aria-label="Провести"><svg><use href="#i-post"/></svg></button>
      <button class="ib" aria-label="Отменить проведение"><svg><use href="#i-unpost"/></svg></button>
      <i class="sep"></i>
      <button class="ib wide" aria-label="Ввести на основании"><svg><use href="#i-enter"/></svg><i class="caret small"></i></button>
      <i class="sep"></i>
      <button class="textbtn">Перейти<i class="caret small"></i></button>
      <i class="sep"></i>
      <button class="ib" aria-label="Справка"><svg><use href="#i-help"/></svg></button>
      <i class="sep"></i>
      <button class="ib" aria-label="Список"><svg><use href="#i-rows"/></svg></button>
      <button class="ib" aria-label="Параметры"><svg><use href="#i-checks"/></svg></button>
      <i class="sep"></i>
      <button class="ib" aria-label="Отчёт"><svg><use href="#i-report"/></svg></button>
    </div>

    <div class="form">
      <div class="fields">
        <label for="num">Номер:</label>
        <div class="pair">
          <div class="field number"><input id="num" value="ЦБПП0090621"></div>
          <label for="date">от:</label>
          <div class="field"><input id="date" value="06.10.2023 16:57:21"><button class="fb" aria-label="Календарь"><svg><use href="#i-date"/></svg></button></div>
        </div>
        <label class="second" for="price">Установка цен:</label>
        <div class="field"><input id="price" value="Установка цен номенклатуры ЦБ000005195 от 06.10.2023 16:57:20"><button class="fb" aria-label="Выбрать"><svg><use href="#i-dots"/></svg></button><button class="fb" aria-label="Очистить"><svg><use href="#i-x"/></svg></button><button class="fb" aria-label="Открыть"><svg><use href="#i-lens"/></svg></button></div>

        <label for="org">Организация:</label>
        <div class="field"><input id="org" value="ИП Поляков Леонид Вячеславович"><button class="fb" aria-label="Выбрать"><svg><use href="#i-dots"/></svg></button><button class="fb" aria-label="Открыть"><svg><use href="#i-lens"/></svg></button></div>
        <label class="second" for="store">Склад:</label>
        <div class="field"><input id="store" value="Уссури Молл  г.Уссурийск ППВ"><button class="fb" aria-label="Выбрать"><svg><use href="#i-dots"/></svg></button><button class="fb" aria-label="Открыть"><svg><use href="#i-lens"/></svg></button></div>
      </div>

      <div class="grid-bar">
        <button class="ib" aria-label="Добавить"><svg><use href="#i-add"/></svg></button>
        <button class="ib" aria-label="Скопировать"><svg><use href="#i-addcopy"/></svg></button>
        <button class="ib" aria-label="Изменить"><svg><use href="#i-edit"/></svg></button>
        <button class="ib" aria-label="Удалить"><svg><use href="#i-del"/></svg></button>
        <button class="ib" aria-label="Записать строку"><svg><use href="#i-save"/></svg></button>
        <button class="ib" aria-label="Вверх"><svg><use href="#i-up"/></svg></button>
        <button class="ib" aria-label="Вниз"><svg><use href="#i-down"/></svg></button>
        <button class="ib" aria-label="По возрастанию"><svg><use href="#i-asc"/></svg></button>
        <button class="ib" aria-label="По убыванию"><svg><use href="#i-desc"/></svg></button>
        <button class="ib" aria-label="Штрихкод"><svg><use href="#i-barcode"/></svg></button>
        <i class="sep"></i>
        <button class="textbtn">Заполнить<i class="caret small"></i></button>
        <i class="sep"></i>
        <button class="textbtn">Подбор</button>
      </div>

      <div class="grid">
        <table>
          <colgroup><col class="c-num"><col><col><col class="c-unit"><col class="c-price"></colgroup>
          <thead><tr><th>№</th><th class="current">Номенклатура</th><th>Характеристика номенклатуры</th><th>Ед.</th><th>Розн. цена (ру...</th></tr></thead>
          <tbody><tr><td class="right">1</td><td class="selected">Swiss Military&nbsp; 06-4345.7.04.003</td><td></td><td>шт</td><td class="right">22 200,00</td></tr></tbody>
        </table>
      </div>

      <div class="fields fields-bottom">
        <label for="dept">Подразделение:</label>
        <div class="field"><input id="dept"><button class="fb" aria-label="Выбрать"><svg><use href="#i-dots"/></svg></button><button class="fb" aria-label="Очистить"><svg><use href="#i-x"/></svg></button><button class="fb" aria-label="Открыть"><svg><use href="#i-lens"/></svg></button></div>
        <label class="third" for="resp">Ответственный:</label>
        <div class="field off"><input id="resp" value="Саналатина Вероника Витальевна" disabled><button class="fb" disabled aria-label="Выбрать"><svg><use href="#i-dots"/></svg></button><button class="fb" disabled aria-label="Очистить"><svg><use href="#i-x"/></svg></button><button class="fb" disabled aria-label="Открыть"><svg><use href="#i-lens"/></svg></button></div>
        <label for="note">Комментарий:</label>
        <div class="field span"><input id="note" value="выравнивание цены по ррц"></div>
      </div>
    </div>

    <footer class="actions">
      <button>Переоценка товаров в рознице</button><i class="sep"></i><button>Печать</button><i class="sep"></i><button class="ok">OK</button><i class="sep"></i><button>Записать</button><i class="sep"></i><button>Закрыть</button>
    </footer>
  </main>

  <div class="tabs">
    <button><svg><use href="#i-doc"/></svg>Переоценки товаров в роз...</button>
    <button class="active"><svg><use href="#i-doc"/></svg>...: переоценка в рознице. ...</button>
  </div>

  <section class="dialog" role="dialog" aria-labelledby="dlg-title">
    <div class="dialog-title"><h2 id="dlg-title">Печать: Переоценка товаров в рознице ЦБПП0090...:21</h2><button aria-label="Закрыть окно печати"><svg><use href="#i-close"/></svg></button></div>
    <div class="dialog-body">
      <ul class="list" role="listbox" aria-label="Печатные формы">
        <li role="option" aria-selected="true">Переоценка товаров в рознице</li>
        <li role="option">Ценники на товары</li>
        <li role="option">Этикетки</li>
      </ul>
      <div class="side">
        <label class="check">На принтер<input type="checkbox"></label>
        <button>Печать</button>
        <button>Отмена</button>
        <button>По умолчанию</button>
      </div>
      <p class="hint">Встроенная печатная форма</p>
    </div>
    <svg class="pointer" viewBox="0 0 12 18"><path d="M1 1v13l3-3 2.500 5.500 2-1L6 10.500h4.500z" fill="#fff" stroke="#444"/></svg>
  </section>
</div>
</body>
</html>
```
FILE: styles.css
```css
* { box-sizing: border-box; }

body {
  margin: 0;
  background: #808080;
  color: #4c4526;
  font: 10px/14px "Liberation Sans", Arial, sans-serif;
}

button, input { font: inherit; color: inherit; }
button { padding: 0; border: 0; background: none; white-space: nowrap; }
input { min-width: 0; outline: 0; }
.sprite { position: absolute; width: 0; height: 0; }

.app {
  position: relative;
  display: flex;
  flex-direction: column;
  min-height: 100vh;
  margin: 0 54px 0 28px;
  background: #ebe6d8;
  box-shadow: 0 0 6px #555;
}

/* window caption */
.caption {
  display: flex;
  height: 12px;
  padding: 0 16px 0 2px;
  overflow: hidden;
  background: #fff;
  color: #a2a2a2;
  font-size: 11px;
  line-height: 6px;
}
.logo { width: 14px; height: 14px; margin: -7px 9px 0 0; }
.caption-text { flex: 1; white-space: nowrap; }
.caption-buttons { display: flex; gap: 30px; }
.caption-buttons button { width: 11px; height: 6px; }
.caption-buttons svg { display: block; width: 11px; height: 11px; margin-top: -6px; }

/* menu and toolbars */
.menu { display: flex; align-items: center; height: 20px; padding: 1px 0 0 3px; }
.menu button { margin-left: 10px; }
.grip { flex: none; width: 3px; height: 13px; background: repeating-linear-gradient(#b8b3a4 0 1px, transparent 1px 3px); }
.sep { flex: none; width: 1px; height: 14px; background: #c4beae; }

.bar { display: flex; align-items: center; height: 24px; padding-left: 3px; }
.section { display: flex; align-items: center; gap: 3px; }
.section .grip { margin-right: 1px; }
.bar .sep { margin-left: -1px; }
.section-a { width: 551px; }
.section-b { width: 223px; }
.section-c { width: 593px; }
.run { display: flex; justify-content: space-between; width: 308px; }

.ib { flex: none; display: flex; align-items: center; justify-content: center; width: 18px; height: 18px; }
.ib svg { width: 16px; height: 16px; }
.ib.narrow { width: 10px; }
.ib.narrow svg { flex: none; width: 14px; height: 14px; }
.ib.wide { width: 25px; gap: 1px; }
.mem { color: #aaa598; font-weight: bold; }
.search { width: 107px; height: 16px; border: 0; background: #fffdf0; }
.caret { flex: none; display: block; border: 4px solid transparent; border-top-color: #3a3522; border-bottom: 0; }
.caret.small, .caret.pale { border-width: 3px; border-bottom: 0; }
.caret.pale { border-top-color: #aaa598; }
.more { align-self: flex-end; width: 8px; }
.textbtn { display: flex; align-items: center; gap: 4px; }

/* document window */
.doc { flex: 1; display: flex; flex-direction: column; margin: 0 2px; }
.doc-title {
  display: flex;
  align-items: center;
  gap: 8px;
  height: 18px;
  padding: 0 4px 0 1px;
  border: solid #77736c;
  border-width: 1px 0;
  background: #b1b1b1;
  color: #5a5a5a;
}
.doc-title > svg { width: 13px; height: 13px; margin-right: -3px; }
.doc-title h1 { flex: 1; margin: 0; font-size: 11px; font-weight: bold; }
.doc-title button { width: 10px; height: 10px; }
.doc-title button svg { display: block; width: 10px; height: 10px; }

.doc-bar { display: flex; align-items: center; gap: 3px; height: 23px; padding-left: 3px; border-bottom: 1px solid #c8c2a8; }

.form { flex: 1; display: flex; flex-direction: column; padding: 7px; background: #fffdf0; }
.fields { display: grid; grid-template-columns: 79px 749fr 84px 798fr; row-gap: 5px; align-items: center; }
.second { padding-left: 8px; }
.pair { display: flex; align-items: center; gap: 3px; }
.pair .field { flex: 1; }
.pair .number { flex: 380; }
.pair .number + label + .field { flex: 353; }
.field { display: flex; min-width: 0; height: 17px; border: 1px solid #a8a48c; background: #fff; color: #1c1c1c; }
.field input { flex: 1; width: 0; padding: 0 2px; border: 0; background: none; white-space: pre; }
.field input::selection { background: #4f68bd; color: #fff; }
.fb { flex: none; width: 13px; border-left: 1px solid #c0bba2; background: #efeada; }
.fb svg { display: block; width: 12px; height: 12px; }

.grid-bar { display: flex; align-items: center; gap: 3px; height: 27px; padding: 2px 0 0 1px; }
.grid-bar .textbtn { margin-left: 2px; }

.grid { flex: 1; border: 1px solid #a8a48c; background: #fff; }
table { width: 100%; border-collapse: collapse; table-layout: fixed; color: #1c1c1c; }
.c-num { width: 83px; }
.c-unit { width: 145px; }
.c-price { width: 82px; }
th, td { height: 17px; padding: 0 3px; border: 1px solid #b5b199; text-align: left; white-space: nowrap; overflow: hidden; line-height: 15px; }
th { height: 18px; background: #f5f2dd; color: #5f5730; font-weight: normal; line-height: 16px; }
tr > :first-child { border-left: 0; }
tr > :last-child { border-right: 0; }
thead th { border-top: 0; }
.current { background: #cfccb5; }
.selected { background: #4f68bd; color: #fff; }
.right { text-align: right; }

.fields-bottom { grid-template-columns: 79px 749fr 99px 783fr; padding-top: 26px; }
.third { padding-left: 18px; }
.off { border-color: transparent; color: #85847e; background: #fffef8; }
.off .fb { border-color: #efeada; color: #999; }
.span { grid-column: 2 / -1; }

.actions { display: flex; align-items: center; justify-content: flex-end; gap: 6px; height: 24px; padding-right: 5px; border-top: 1px solid #a8a48c; border-bottom: 2px solid #fffdf0; }
.actions .ok { font-size: 11px; font-weight: bold; }

/* open windows */
.tabs { display: flex; height: 22px; padding: 1px 1px 2px; border-bottom: 1px solid #d2ccbc; }
.tabs button { display: flex; align-items: center; gap: 2px; width: 155px; padding-left: 2px; background: #b1b0ab; }
.tabs svg { width: 13px; height: 13px; }
.tabs .active { background: #b0cce6; }

/* print dialog */
.dialog { position: absolute; top: 433px; right: 204px; width: 334px; border: 3px solid #c9c9c9; border-top: 0; background: #fffdf0; box-shadow: 0 0 2px #777; }
.dialog-title { display: flex; align-items: center; height: 20px; padding: 1px 6px 0 3px; background: #c9c9c9; color: #333; }
.dialog-title h2 { flex: 1; margin: 0; font-size: 11px; font-weight: bold; white-space: nowrap; }
.dialog-title button, .dialog-title svg { display: block; width: 10px; height: 10px; }
.dialog-body { display: grid; grid-template-columns: 234px 75px; column-gap: 4px; padding: 6px 7px 7px 8px; }
.list { height: 239px; margin: 0; padding: 0; border: 1px solid #a8a48c; background: #fff; color: #1c1c1c; list-style: none; }
.list li { height: 17px; padding-left: 3px; line-height: 17px; }
.list [aria-selected] { background: #4f68bd; color: #fff; font-size: 11px; font-weight: bold; }
.side { display: flex; flex-direction: column; gap: 4px; }
.side button { height: 20px; border: 1px solid #b5ae94; background: #e9e3d0; }
.check { display: flex; align-items: center; justify-content: space-between; height: 14px; }
.check input { appearance: none; width: 12px; height: 12px; margin: 0; border: 1px solid #8f8b78; border-radius: 2px; background: #fff; }
.hint { grid-column: 1 / -1; margin: 0; }
.pointer { position: absolute; top: 76px; left: 199px; width: 12px; height: 18px; }
```
FILE: app.js
```js
// The number field is active with its value selected when the document opens.
const number = document.getElementById("num");
number.focus();
number.select();
```
